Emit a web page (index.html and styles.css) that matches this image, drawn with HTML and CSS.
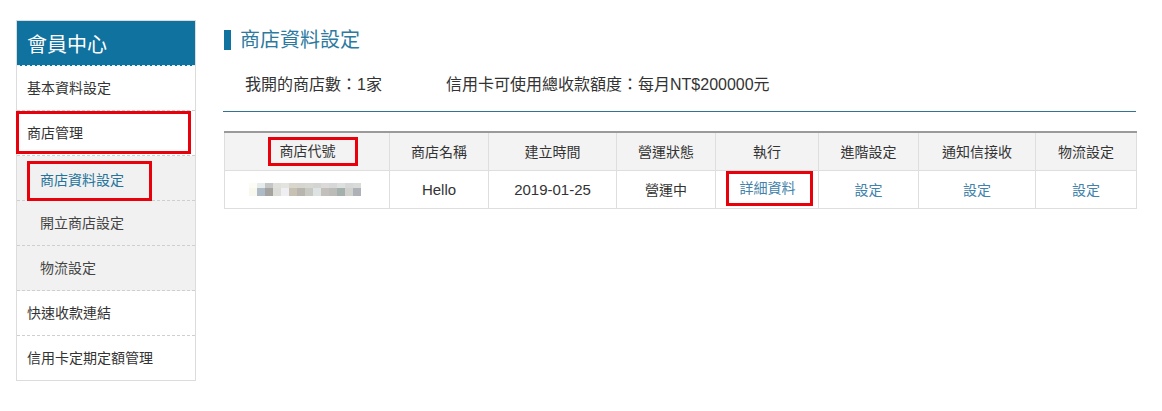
FILE: index.html
```html
<!DOCTYPE html>
<html lang="zh-Hant">
<head>
<meta charset="utf-8">
<title>商店資料設定</title>
<link rel="stylesheet" href="styles.css">
</head>
<body>
<div class="page">
  <aside class="sidebar">
    <div class="side-head">會員中心</div>
    <ul class="menu">
      <li class="item">基本資料設定</li>
      <li class="item mark-wrap">商店管理<span class="mark mark-menu"></span></li>
      <li class="item sub active"><span class="mark-inline">商店資料設定</span></li>
      <li class="item sub">開立商店設定</li>
      <li class="item sub">物流設定</li>
      <li class="item">快速收款連結</li>
      <li class="item last">信用卡定期定額管理</li>
    </ul>
  </aside>
  <main class="main">
    <h1 class="title"><span class="bar"></span>商店資料設定</h1>
    <div class="info">
      <span class="info-a">我開的商店數：1家</span>
      <span class="info-b">信用卡可使用總收款額度：每月NT$200000元</span>
    </div>
    <table class="grid">
      <colgroup>
        <col class="c1"><col class="c2"><col class="c3"><col class="c4">
        <col class="c5"><col class="c6"><col class="c7"><col class="c8">
      </colgroup>
      <thead>
        <tr>
          <th><span class="boxed boxed-th">商店代號</span></th>
          <th>商店名稱</th>
          <th>建立時間</th>
          <th>營運狀態</th>
          <th>執行</th>
          <th>進階設定</th>
          <th>通知信接收</th>
          <th>物流設定</th>
        </tr>
      </thead>
      <tbody>
        <tr>
          <td>
            <div class="mosaic">
              <span style="background:#fcfcf5"></span><span style="background:#e6ebec"></span><span style="background:#c4c6c5"></span><span style="background:#dfe0dc"></span><span style="background:#e3e3e0"></span><span style="background:#d8d6cd"></span><span style="background:#d6d5cf"></span><span style="background:#d7d8d3"></span><span style="background:#d4d4d3"></span><span style="background:#dcd9d9"></span><span style="background:#d7d6d9"></span><span style="background:#dde0de"></span><span style="background:#d6d7d9"></span><span style="background:#d8dbd8"></span>
              <span style="background:#f8f8ef"></span><span style="background:#aebbc6"></span><span style="background:#a5a39f"></span><span style="background:#dcdcd9"></span><span style="background:#efeef2"></span><span style="background:#c7c1b4"></span><span style="background:#b7b5ae"></span><span style="background:#c8c9c2"></span><span style="background:#dde2e2"></span><span style="background:#c3bfbc"></span><span style="background:#bbbbb8"></span><span style="background:#a4b0ae"></span><span style="background:#d0d0cc"></span><span style="background:#afb1b9"></span>
            </div>
          </td>
          <td class="num">Hello</td>
          <td class="num">2019-01-25</td>
          <td>營運中</td>
          <td class="exec"><a class="link boxed boxed-td">詳細資料</a></td>
          <td><a class="link">設定</a></td>
          <td><a class="link">設定</a></td>
          <td><a class="link">設定</a></td>
        </tr>
      </tbody>
    </table>
  </main>
</div>
</body>
</html>
```

FILE: styles.css
```css
* { box-sizing: border-box; }
html, body { margin: 0; padding: 0; background: #fff; }
body {
  font-family: "Liberation Sans", "Noto Sans CJK TC", sans-serif;
  color: #333;
  width: 1162px;
  height: 411px;
  overflow: hidden;
}
.page {
  display: flex;
  align-items: flex-start;
  padding: 20px 0 0 16px;
  gap: 27px;
}
.sidebar {
  width: 180px;
  border: 1px solid #dcdcdc;
  background: #fff;
}
.side-head {
  background: #10729f;
  color: #fff;
  font-size: 20px;
  height: 45px;
  line-height: 48px;
  padding-left: 10px;
  border-bottom: 1px dashed #e6eef2;
}
.menu { list-style: none; margin: 0; padding: 0; }
.item {
  position: relative;
  height: 45px;
  line-height: 44px;
  font-size: 14px;
  color: #333;
  padding-left: 10px;
  border-bottom: 1px dashed #cfcfcf;
}
.item.last { border-bottom: none; height: 44px; }
.item.sub {
  background: #f1f1f1;
  padding-left: 23px;
  color: #444;
}
.item.active { color: #23739b; }
.mark {
  position: absolute;
  border: 3px solid #e8000b;
  pointer-events: none;
}
.mark-menu { left: -1px; top: 0; width: 175px; height: 43px; }
.mark-inline {
  display: inline-block;
  width: 125px;
  height: 40px;
  line-height: 33px;
  margin-left: -13px;
  padding: 0 0 0 10px;
  border: 3px solid #e8000b;
  vertical-align: top;
  margin-top: 5px;
}

.main { width: 913px; }
.title {
  display: flex;
  align-items: center;
  gap: 9px;
  margin: 8px 0 0 1px;
  font-size: 20px;
  font-weight: normal;
  line-height: 24px;
  color: #2d7aa0;
}
.bar { width: 7px; height: 20px; background: #10729f; }
.info {
  display: flex;
  padding-left: 22px;
  margin-top: 23px;
  font-size: 16px;
  line-height: 20px;
  color: #333;
  padding-bottom: 16px;
  border-bottom: 1px solid #2f7590;
}
.info-a { width: 201px; }

.grid {
  margin-top: 19px;
  margin-left: 1px;
  width: 912px;
  border-collapse: collapse;
  table-layout: fixed;
  border-top: 2px solid #9a9a9a;
  font-size: 14px;
}
.c1 { width: 165px; } .c2 { width: 99px; } .c3 { width: 128px; } .c4 { width: 99px; }
.c5 { width: 103px; } .c6 { width: 100px; } .c7 { width: 117px; } .c8 { width: 101px; }
.grid th, .grid td {
  border: 1px solid #dedede;
  text-align: center;
  padding: 0;
  height: 38px;
  font-weight: normal;
  color: #333;
}
.grid th { background: #f3f3f3; }
.grid td.num { font-size: 15px; }
.grid td.exec { vertical-align: top; }
.link { color: #3f82aa; text-decoration: none; }
.boxed {
  display: inline-block;
  border: 3px solid #e8000b;
  vertical-align: middle;
}
.boxed-th { padding: 0 19px 0 9px; line-height: 23px; margin-left: 11px; }
.boxed-td { padding: 0 14px 0 11px; line-height: 29px; margin-left: 4px; vertical-align: top; }
.mosaic {
  display: grid;
  grid-template-columns: repeat(14, 8px);
  grid-template-rows: 5px 8px;
  width: 112px;
  margin-left: 24px;
  margin-top: 1px;
}
.mosaic span { display: block; }
```
